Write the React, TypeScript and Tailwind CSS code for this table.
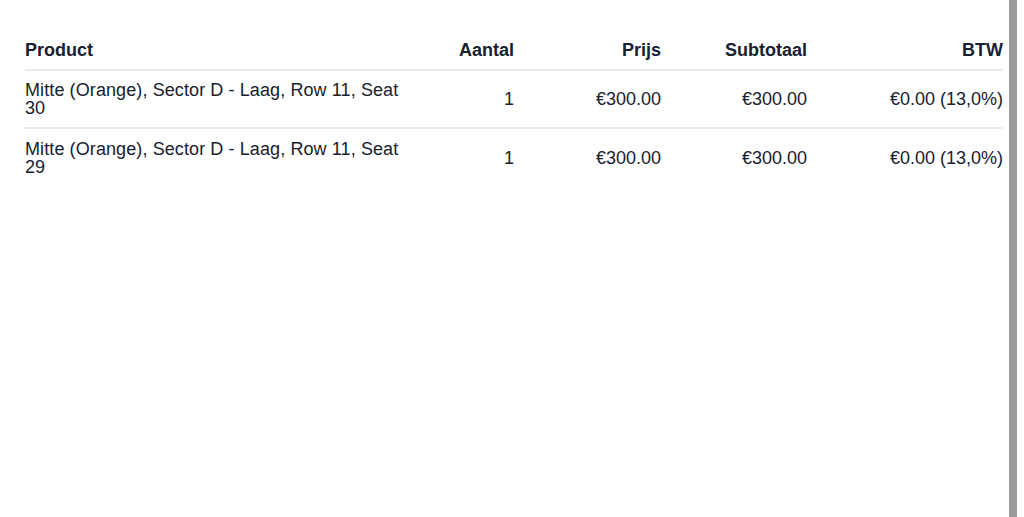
import React from "react";

const rows = [
  { product: "Mitte (Orange), Sector D - Laag, Row 11, Seat 30", qty: "1", price: "€300.00", sub: "€300.00", btw: "€0.00 (13,0%)" },
  { product: "Mitte (Orange), Sector D - Laag, Row 11, Seat 29", qty: "1", price: "€300.00", sub: "€300.00", btw: "€0.00 (13,0%)" },
];

const grid = "grid grid-cols-[385px_104px_147px_146px_1fr] items-center";

export default function App() {
  return (
    <div className="flex h-[517px] w-full bg-white text-[18px] text-[#18212f]" style={{ fontFamily: '"Liberation Sans", Arial, sans-serif' }}>
      <div className="flex-1 pl-[25px] pr-[6px] pt-[30px]">
        <div className={`${grid} h-[41px] border-b-2 border-[#e9e9e9] font-bold leading-[18px]`}>
          <div>Product</div>
          <div className="text-right">Aantal</div>
          <div className="text-right">Prijs</div>
          <div className="text-right">Subtotaal</div>
          <div className="text-right">BTW</div>
        </div>
        {rows.map((r, i) => (
          <div key={i} className={`${grid} h-[58px] leading-[18px] ${i < rows.length - 1 ? "border-b-2 border-[#e9e9e9]" : ""}`}>
            <div className="pr-[8px] tracking-[0.1px]">{r.product}</div>
            <div className="text-right">{r.qty}</div>
            <div className="text-right">{r.price}</div>
            <div className="text-right">{r.sub}</div>
            <div className="text-right">{r.btw}</div>
          </div>
        ))}
      </div>
      <div className="w-[8px] bg-[#9b9b9b]" />
      <div className="w-[7px]" />
    </div>
  );
}
